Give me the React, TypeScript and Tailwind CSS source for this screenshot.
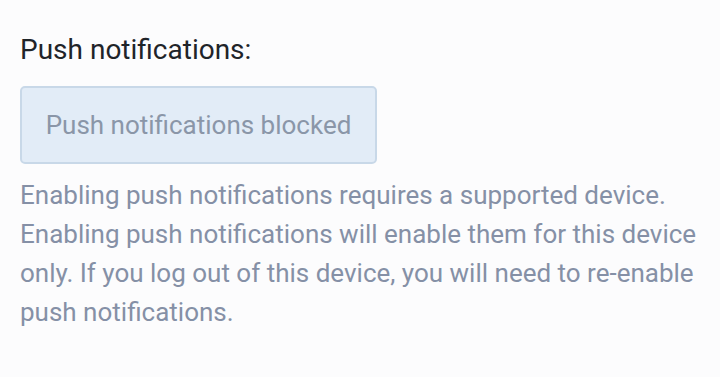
export default function App() {
  return (
    <div className="min-h-screen w-full bg-[#fcfcfd] px-5 pt-[32px] font-['Roboto',sans-serif]">
      <p className="text-[28px] leading-[36px] text-[#1f2429]">Push notifications:</p>
      <div className="mt-[18px] flex h-[78px] w-[357px] items-center justify-center rounded-[5px] border-2 border-[#c8d8e8] bg-[#e2ecf7] text-[26px] text-[#8a96a8]">
        Push notifications blocked
      </div>
      <p className="mt-[12px] text-[26px] leading-[39px] text-[#8590a6]">
        Enabling push notifications requires a supported device. Enabling push notifications will
        enable them for this device only. If you log out of this device, you will need to re-enable
        push notifications.
      </p>
    </div>
  );
}
